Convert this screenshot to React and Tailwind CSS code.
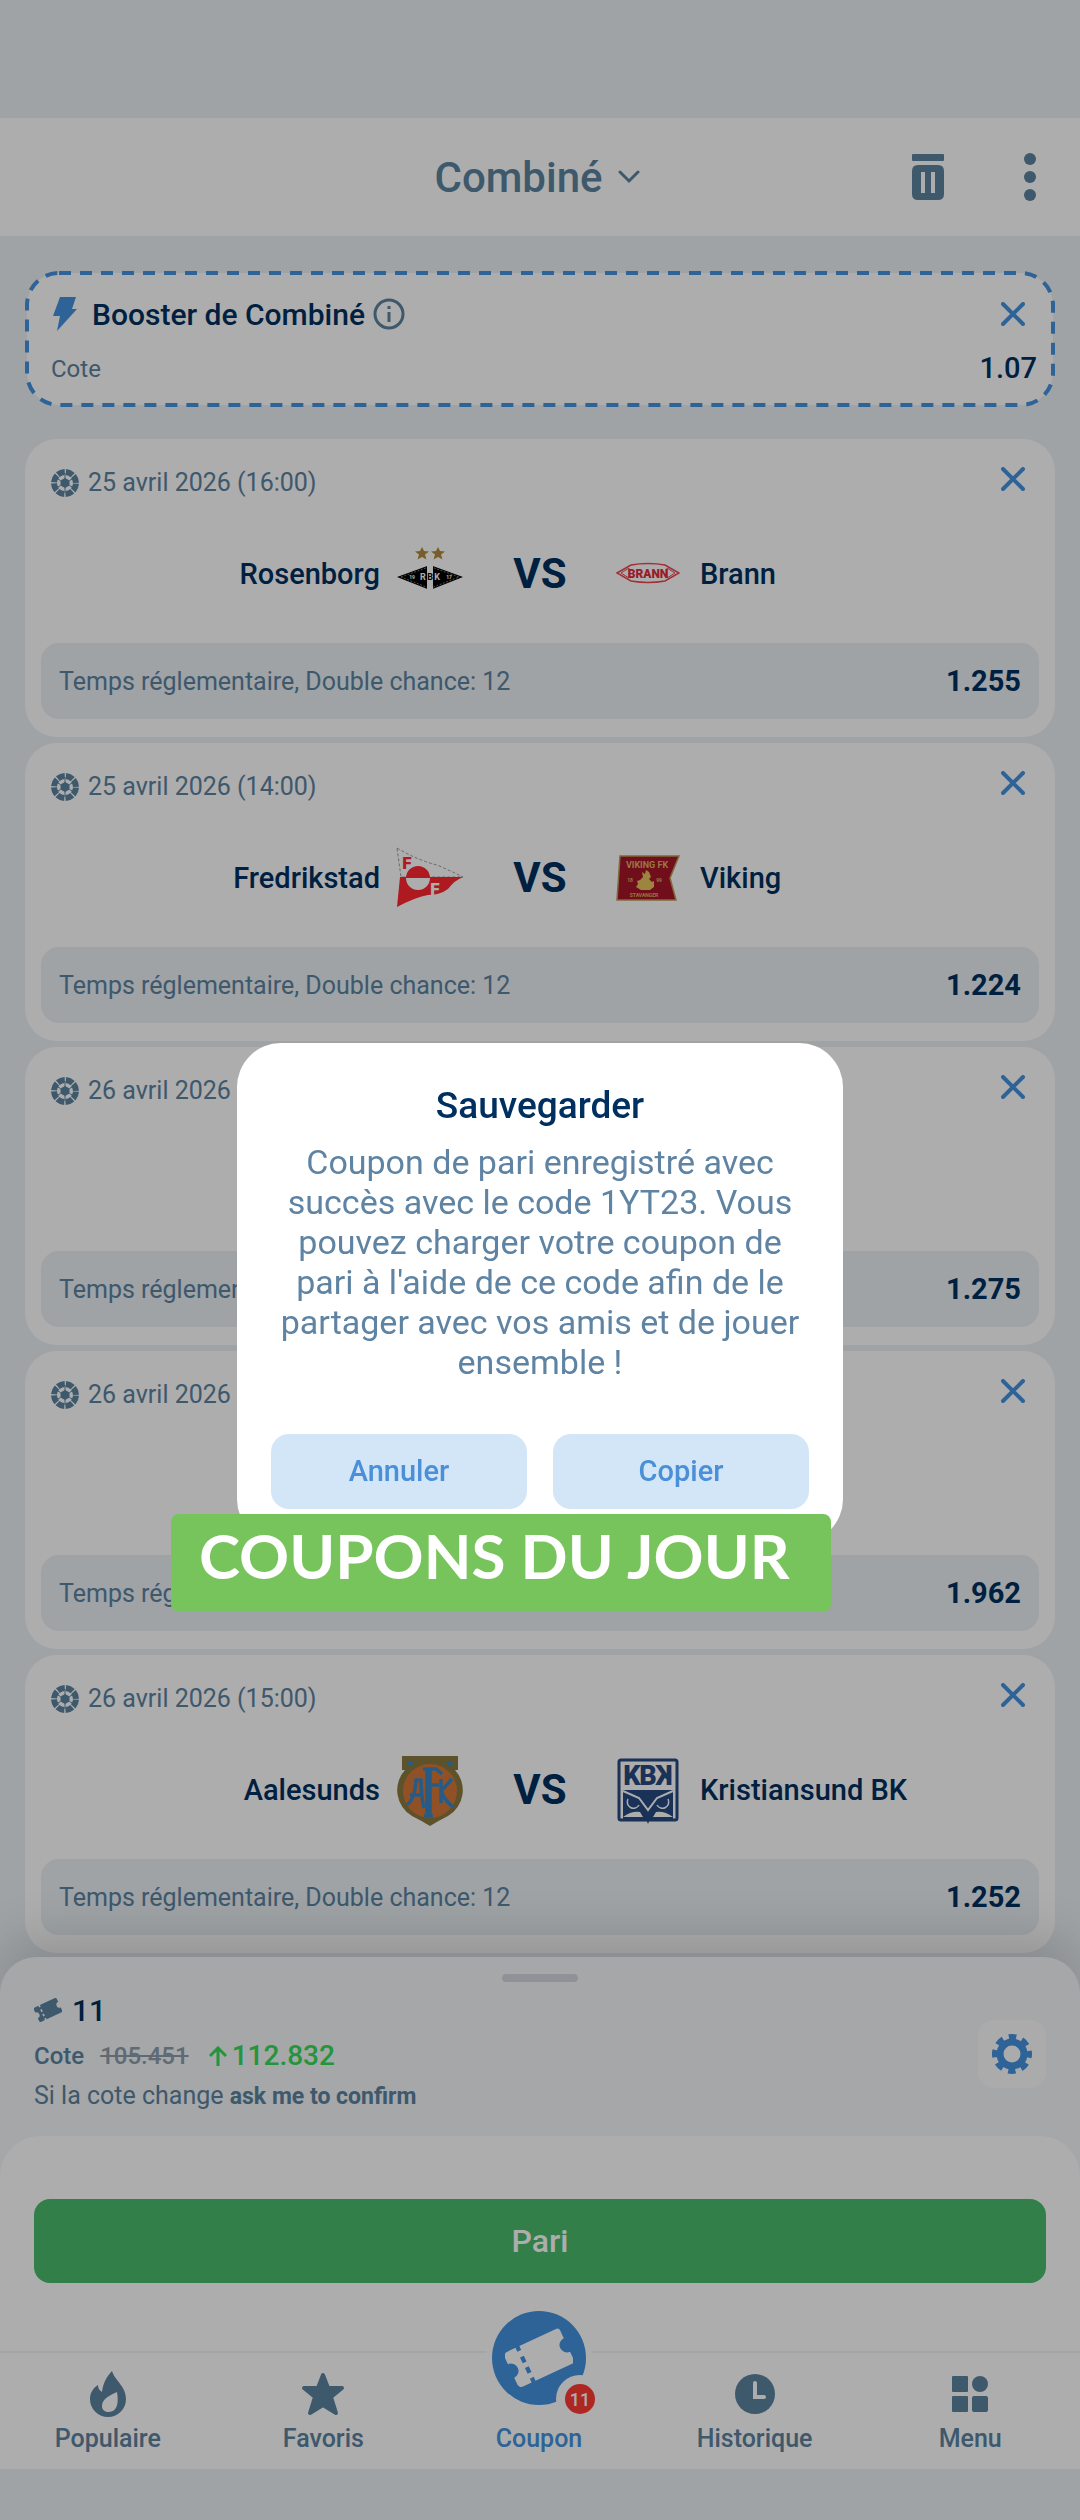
import { useState } from "react";

function BallIcon() {
  return (
    <svg viewBox="0 0 28 28" className="size-7 shrink-0" aria-hidden="true">
      <circle cx="14" cy="14" r="11" fill="none" stroke="#5c82a0" strokeWidth="6" strokeDasharray="7.440 1.200" strokeDashoffset="-0.600" />
      <path d="M14 9l4.500 2.500v5L14 19l-4.500-2.500v-5z" fill="#5c82a0" />
      <path d="M9.500 11.500L5 9M18.500 11.500L23 9M9.500 16.500L5 19M18.500 16.500L23 19M14 4v6M14 18v6" stroke="#5c82a0" strokeWidth="1" />
    </svg>
  );
}

function CloseIcon() {
  return (
    <svg viewBox="0 0 24 24" className="size-6" fill="none" stroke="#4592e0" strokeWidth="4" strokeLinecap="round" aria-hidden="true">
      <path d="M2 2l20 20M22 2L2 22" />
    </svg>
  );
}

function TicketIcon({ className }) {
  return (
    <svg viewBox="0 0 64 64" className={className} fill="currentColor" aria-hidden="true">
      <g transform="rotate(-25 32 32)">
        <path d="M7 14h9v4h4v-4h38a3 3 0 0 1 3 3v8a7 7 0 0 0 0 14v8a3 3 0 0 1-3 3H20v-4h-4v4H7a4 4 0 0 1-4-4v-7a7 7 0 0 0 0-14v-7a4 4 0 0 1 4-4zm9 10v6h4v-6zm0 11v6h4v-6z" fillRule="evenodd" />
      </g>
    </svg>
  );
}

function RosenborgCrest() {
  return (
    <svg viewBox="0 0 68 68" className="size-17" aria-hidden="true">
      <g fill="#b28a3c">
        <path d="M26 6l2 4 5 .5-4 3 1.500 5-4.500-2.500-4.500 2.500 1.500-5-4-3 5-.5z" />
        <path d="M42 6l2 4 5 .5-4 3 1.500 5-4.500-2.500-4.500 2.500 1.500-5-4-3 5-.5z" />
      </g>
      <path d="M1 36l33-12 33 12-33 13z" fill="#000" />
      <path d="M5 36l29-10.500L63 36 34 47.500z" fill="none" stroke="#777" strokeWidth="1" strokeDasharray="2 1.500" />
      <path d="M31 24h6v25h-6z" fill="#fff" />
      <g fill="#fff" fontFamily="Roboto, sans-serif" fontSize="9" fontWeight="700" textAnchor="middle">
        <text x="27" y="39">R</text>
        <text x="34" y="39" fill="#000">B</text>
        <text x="41" y="39">K</text>
        <text x="16" y="38" fontSize="5">19</text>
        <text x="53" y="38" fontSize="5">17</text>
      </g>
    </svg>
  );
}

function BrannCrest() {
  return (
    <svg viewBox="0 0 64 64" className="size-16" aria-hidden="true">
      <path d="M1 30l14-8q17-3 34 0l14 8-14 8q-17 3-34 0z" fill="#fff" stroke="#ec4650" strokeWidth="1.500" />
      <path d="M5 30l8-5v10zM59 30l-8-5v10z" fill="none" stroke="#ec4650" strokeWidth="1" />
      <text x="32" y="35" fontFamily="Roboto, sans-serif" fontSize="12" fontWeight="900" fill="#e02c3c" textAnchor="middle">BRANN</text>
    </svg>
  );
}

function FredrikstadCrest() {
  return (
    <svg viewBox="0 0 68 68" className="size-17" aria-hidden="true">
      <path d="M1 3q20 12 40 17 14 6 26 12H5z" fill="#fff" stroke="#9b9b9b" strokeWidth="1" strokeDasharray="3 2" />
      <path d="M4 32h63q-8 3-15 12-8 6-20 6-12 2-31 12z" fill="#ff2932" />
      <circle cx="22" cy="33" r="12" fill="#fff" />
      <path d="M10 33a12 12 0 0 1 24 0z" fill="#ff2932" />
      <g fontFamily="Roboto, sans-serif" fontSize="17" fontWeight="900" textAnchor="middle">
        <text x="11" y="24" fill="#ff2932">F</text>
        <text x="39" y="50" fill="#fff">F</text>
      </g>
    </svg>
  );
}

function VikingCrest() {
  return (
    <svg viewBox="0 0 64 64" className="size-16" aria-hidden="true">
      <path d="M4 9h59l-9 22 6 22H1z" fill="#a5162a" stroke="#c09a58" strokeWidth="1.500" />
      <g fontFamily="Roboto, sans-serif" fontWeight="700" fill="#e0b060" textAnchor="middle">
        <text x="31" y="21" fontSize="9">VIKING FK</text>
        <text x="14" y="35" fontSize="5">18</text>
        <text x="43" y="35" fontSize="5">99</text>
        <text x="28" y="50" fontSize="5">STAVANGER</text>
      </g>
      <path d="M26 25l3 2 1-4 3 2 2 5-2 2 3 3 2-1 0 6-4 3h-9l-5-3 2-3-1-3 3-1 3-3z" fill="#e6c45c" />
    </svg>
  );
}

function AalesundsCrest() {
  return (
    <svg viewBox="0 0 68 72" className="h-18 w-17" aria-hidden="true">
      <path d="M6 1h56v14h-3a30 30 0 0 1-7 46Q42 66 34 71 26 66 16 61A30 30 0 0 1 9 15H6z" fill="#8a7a3e" />
      <circle cx="34" cy="36" r="27" fill="#d4783a" />
      <g fill="none" stroke="#3a86c4" strokeWidth="3.500">
        <path d="M11 50q8-6 9-25h5q0 16 3 28M14 40h12" />
        <path d="M27 14h13l6 5M34 14v46M28 61h9M34 30h9M31 15v44" />
        <path d="M45 24v24M56 24L45 36q4 10 12 16" />
      </g>
      <path d="M12 6h6l-2 5h-5zM50 6h6l1 5h-5z" fill="#3a86c4" />
    </svg>
  );
}

function KristiansundCrest() {
  return (
    <svg viewBox="0 0 64 68" className="h-17 w-16" aria-hidden="true">
      <rect x="3" y="3" width="58" height="60" rx="2" fill="#fff" stroke="#274a80" strokeWidth="3" />
      <g fontFamily="Roboto, sans-serif" fontSize="27" fontWeight="900" fill="#274a80" textAnchor="middle">
        <text x="16" y="28">K</text>
        <text x="32" y="28">B</text>
        <text x="-48" y="28" transform="scale(-1 1)">K</text>
      </g>
      <path d="M7 33h50v29H7z" fill="#274a80" />
      <path d="M7 34l16 7 9 12 9-12 16-7" fill="none" stroke="#fff" strokeWidth="2" />
      <path d="M12 42a6 6 0 1 0 11 6M52 42a6 6 0 1 1-11 6" fill="none" stroke="#fff" strokeWidth="1.500" />
      <path d="M7 60q8-6 17-5l3 5zM57 60q-8-6-17-5l-3 5z" fill="#fff" />
      <path d="M24 47l8 20 8-20-8 9z" fill="#274a80" />
    </svg>
  );
}

const bets = [
  { id: 1, date: "25 avril 2026 (16:00)", home: "Rosenborg", away: "Brann", homeCrest: <RosenborgCrest />, awayCrest: <BrannCrest />, odd: "1.255" },
  { id: 2, date: "25 avril 2026 (14:00)", home: "Fredrikstad", away: "Viking", homeCrest: <FredrikstadCrest />, awayCrest: <VikingCrest />, odd: "1.224" },
  { id: 3, date: "26 avril 2026", odd: "1.275" },
  { id: 4, date: "26 avril 2026", odd: "1.962" },
  { id: 5, date: "26 avril 2026 (15:00)", home: "Aalesunds", away: "Kristiansund BK", homeCrest: <AalesundsCrest />, awayCrest: <KristiansundCrest />, odd: "1.252" },
];

function BetCard({ bet, onRemove }) {
  return (
    <article className="rounded-[32px] bg-white px-4 pb-[18px]">
      <div className="flex h-[88px] items-center justify-between pr-[14px] pl-[10px]">
        <div className="flex items-center gap-[9px] text-[25px] text-[#5c82a0]">
          <BallIcon />
          <span>{bet.date}</span>
        </div>
        <button onClick={onRemove} aria-label="Supprimer" className="-mt-2">
          <CloseIcon />
        </button>
      </div>
      <div className="grid h-29 grid-cols-[1fr_auto_1fr] items-start text-[29px] font-medium text-[#003060]">
        <div className="flex h-24 items-center justify-end gap-4">
          <span>{bet.home}</span>
          {bet.homeCrest}
        </div>
        <span className="flex h-[92px] w-38 items-center justify-center text-[42px] font-bold">{bet.home && "VS"}</span>
        <div className="flex h-24 items-center gap-5">
          {bet.awayCrest}
          <span>{bet.away}</span>
        </div>
      </div>
      <div className="flex h-19 items-center justify-between rounded-[18px] bg-[#eaf0f4] px-[18px] pt-[2px]">
        <span className="text-[25px] text-[#5c82a0]">Temps réglementaire, Double chance: 12</span>
        <span className="text-[29px] font-bold text-[#003060]">{bet.odd}</span>
      </div>
    </article>
  );
}

function NavItem({ label, active, children }) {
  return (
    <a href="#" className={`flex flex-col items-center ${active ? "text-[#4592e0]" : "text-[#5c82a0]"}`}>
      <span className="flex h-[70px] items-center justify-center pt-3">{children}</span>
      <span className="text-[25px] leading-8 font-medium">{label}</span>
    </a>
  );
}

export default function App() {
  const [items, setItems] = useState(bets);
  const [saved, setSaved] = useState(true);

  const removeBet = (id) => {
    setItems((prev) => prev.filter((b) => b.id !== id));
  };

  return (
    <div className="flex min-h-screen flex-col bg-[#eaf0f4] font-['Roboto',sans-serif]">
      <header className="mt-[118px] grid h-[118px] grid-cols-[1fr_auto_1fr] items-center bg-white pr-11 pl-[38px] text-[#5c82a0]">
        <span />
        <button className="flex items-center gap-[15px] text-[42px] font-medium">
          Combiné
          <svg viewBox="0 0 22 14" className="w-[22px]" fill="none" stroke="currentColor" strokeWidth="3" strokeLinecap="round" aria-hidden="true">
            <path d="M2 2l9 9 9-9" />
          </svg>
        </button>
        <div className="flex items-center justify-end gap-20">
          <button aria-label="Vider le coupon">
            <svg viewBox="0 0 32 46" className="h-[46px] w-8" fill="currentColor" aria-hidden="true">
              <rect width="32" height="7" rx="1" />
              <path d="M6 11h20q6 0 6 6v23q0 6-6 6H6q-6 0-6-6V17q0-6 6-6zm3 7v21h4V18zm10 0v21h4V18z" fillRule="evenodd" />
            </svg>
          </button>
          <button aria-label="Plus d'options">
            <svg viewBox="0 0 12 48" className="h-12 w-3" fill="currentColor" aria-hidden="true">
              <circle cx="6" cy="6" r="6" />
              <circle cx="6" cy="24" r="6" />
              <circle cx="6" cy="42" r="6" />
            </svg>
          </button>
        </div>
      </header>

      <main className="flex flex-col gap-[6px] px-[25px] pt-[35px] pb-1">
        <section className="relative mb-[26px] h-[136px] px-[26px]">
          <svg className="absolute inset-0 size-full" aria-hidden="true">
            <rect x="2" y="2" rx="32" className="h-[calc(100%-4px)] w-[calc(100%-4px)] fill-white stroke-[#4592e0]" strokeWidth="4" strokeDasharray="12 9" />
          </svg>
          <div className="relative flex h-[86px] items-center justify-between pr-[4px]">
            <div className="flex items-center text-[30px] font-medium text-[#003060]">
              <svg viewBox="0 0 26 34" className="mr-[15px] h-[34px] w-[26px]" fill="#4592e0" aria-hidden="true">
                <path d="M9 0h16l-4 12h5L6 34l3-15H2z" />
              </svg>
              <span>Booster de Combiné</span>
              <svg viewBox="0 0 32 32" className="ml-[8px] size-8" fill="none" stroke="#5c82a0" strokeWidth="3" aria-hidden="true">
                <circle cx="16" cy="16" r="14" />
                <path d="M16 14v10M16 8v3" />
              </svg>
            </div>
            <button aria-label="Fermer">
              <CloseIcon />
            </button>
          </div>
          <div className="relative -mt-1 -mr-[8px] flex h-8 items-center justify-between">
            <span className="text-[24px] text-[#5c82a0]">Cote</span>
            <span className="text-[29px] font-medium text-[#003060]">1.07</span>
          </div>
        </section>
        {items.map((bet) => (
          <BetCard key={bet.id} bet={bet} onRemove={() => removeBet(bet.id)} />
        ))}
      </main>

      <footer className="relative rounded-t-[36px] bg-[#f3f6f8] shadow-[0_-20px_50px_rgba(0,0,0,0.15)]">
        <div className="flex justify-center pt-[17px]">
          <span className="h-2 w-19 rounded-full bg-[#d5d8e0]" />
        </div>
        <div className="flex h-[154px] items-start justify-between px-[34px] pt-[10px]">
          <div className="text-[24px] text-[#5c82a0]">
            <div className="flex h-9 items-center gap-[10px]">
              <TicketIcon className="size-7" />
              <span className="text-[30px] font-medium text-[#003060]">11</span>
            </div>
            <div className="mt-2 flex h-10 items-center">
              <span className="font-medium">Cote</span>
              <s className="ml-4 font-medium text-[#8e9dab]">105.451</s>
              <span className="ml-5 flex items-center gap-[5px] text-[28px] font-medium text-[#35dc57]">
                <svg viewBox="0 0 18 20" className="h-5 w-[18px]" fill="none" stroke="currentColor" strokeWidth="3" aria-hidden="true">
                  <path d="M9 20V2M1 10l8-8 8 8" />
                </svg>
                112.832
              </span>
            </div>
            <p className="mt-[2px] h-9 text-[25px] leading-9">
              Si la cote change <b className="text-[23px] font-bold">ask me to confirm</b>
            </p>
          </div>
          <button aria-label="Paramètres" className="mt-7 flex size-17 items-center justify-center rounded-2xl bg-[#fdfdfd]">
            <svg viewBox="0 0 40 40" className="size-10" fill="none" stroke="#4592e0" aria-hidden="true">
              <circle cx="20" cy="20" r="12" strokeWidth="7" />
              <circle cx="20" cy="20" r="17" strokeWidth="6" strokeDasharray="7.400 5.950" strokeDashoffset="3.700" />
            </svg>
          </button>
        </div>
        <div className="rounded-t-[40px] bg-white px-[34px] pt-[63px] pb-17">
          <button className="h-[84px] w-full rounded-2xl bg-[#4bbc6d] text-[32px] font-medium text-white">Pari</button>
        </div>
        <nav className="grid h-[118px] grid-cols-5 border-t-2 border-[#f2f3f4] bg-white pr-[2px]">
          <NavItem label="Populaire">
            <svg viewBox="0 0 36 46" className="h-[46px] w-9" fill="currentColor" aria-hidden="true">
              <path d="M22 0c3 10 14 15 14 28a18 18 0 0 1-36 0c0-6 3-11 8-14 0 3 1 5 4 7C13 12 17 5 22 0zm5 21c-7 3-15 7-15 14 0 4 3 6 7 6 8 0 10-9 8-20z" fillRule="evenodd" />
            </svg>
          </NavItem>
          <NavItem label="Favoris">
            <svg viewBox="0 0 44 44" className="size-11" fill="currentColor" stroke="currentColor" strokeWidth="4" strokeLinejoin="round" aria-hidden="true">
              <path d="M22 3l5 13h14L30 25l5 16-13-8-13 8 5-16L3 16h14z" />
            </svg>
          </NavItem>
          <NavItem label="Coupon" active>
            <span className="relative -mt-[72px] flex size-[94px] items-center justify-center rounded-full bg-[#4592e0] text-white ring-6 ring-white">
              <TicketIcon className="size-17" />
              <span className="absolute -right-[18px] -bottom-[18px] flex size-12 items-center justify-center rounded-full bg-white">
                <span className="flex size-[30px] items-center justify-center rounded-full bg-[#ff3a34] text-[18px] font-medium text-white">11</span>
              </span>
            </span>
          </NavItem>
          <NavItem label="Historique">
            <svg viewBox="0 0 40 40" className="size-10" aria-hidden="true">
              <circle cx="20" cy="20" r="20" fill="currentColor" />
              <path d="M20 9v14h9" fill="none" stroke="#fff" strokeWidth="4" strokeLinecap="round" />
            </svg>
          </NavItem>
          <NavItem label="Menu">
            <svg viewBox="0 0 36 36" className="size-9" fill="currentColor" aria-hidden="true">
              <rect width="16" height="16" rx="1" />
              <circle cx="28" cy="8" r="8" />
              <rect y="20" width="16" height="16" rx="1" />
              <rect x="20" y="20" width="16" height="16" rx="2" />
            </svg>
          </NavItem>
        </nav>
      </footer>
      <div className="relative min-h-12 flex-1 bg-[#eaf0f4]" />

      {saved && (
        <div className="fixed inset-0 flex items-center justify-center bg-black/32 pt-[66px]">
          <div role="dialog" aria-labelledby="save-title" className="relative w-[606px] rounded-[44px] bg-white px-[34px] pt-10 pb-[34px] text-center">
            <h2 id="save-title" className="text-[37px] leading-[46px] font-medium text-[#003060]">Sauvegarder</h2>
            <p className="mt-[13px] text-[34px] leading-10 text-[#5f83a3]">
              Coupon de pari enregistré avec
              <br />
              succès avec le code 1YT23. Vous
              <br />
              pouvez charger votre coupon de
              <br />
              pari à l'aide de ce code afin de le
              <br />
              partager avec vos amis et de jouer
              <br />
              ensemble !
            </p>
            <div className="mt-[52px] grid grid-cols-2 gap-[26px] text-[29px] font-medium text-[#4a8fd8]">
              <button onClick={() => setSaved(false)} className="h-[75px] rounded-[18px] bg-[#d2e6f7]">
                Annuler
              </button>
              <button onClick={() => setSaved(false)} className="h-[75px] rounded-[18px] bg-[#d2e6f7]">
                Copier
              </button>
            </div>
            <div className="absolute -bottom-[69px] -left-[66px] h-[98px] w-[660px] rounded-lg bg-[#78c45c] pt-[6px] pl-7 text-left font-['Lato',sans-serif] text-[62px] leading-[70px] font-bold whitespace-nowrap text-white">
              COUPONS DU JOUR
            </div>
          </div>
        </div>
      )}
    </div>
  );
}
